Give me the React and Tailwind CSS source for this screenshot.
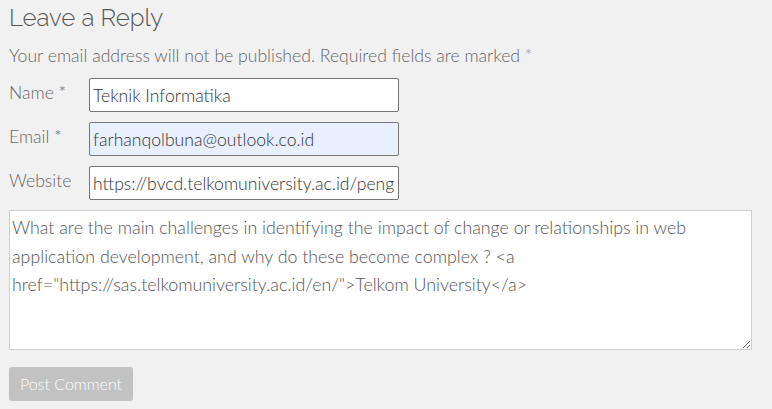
import React from 'react';

const comment =
  'What are the main challenges in identifying the impact of change or relationships in web\napplication development, and why do these become complex ? <a\nhref="https://sas.telkomuniversity.ac.id/en/">Telkom University</a>';

const Field = ({ label, value, autofill }) => (
  <div className="flex items-start">
    <label className="w-[80px] pt-[3px] text-[17.6px] leading-[24px] font-light text-[#666]">{label}</label>
    <input
      readOnly
      value={value}
      className={`w-[310px] h-[34px] px-[3px] border border-[#767676] rounded-[2px] text-[17.6px] font-light text-[#333] outline-none ${
        autofill ? 'bg-[#e8f0fe]' : 'bg-white'
      }`}
    />
  </div>
);

const App = () => {
  return (
    <div className="w-[772px] h-[409px] bg-[#f1f1f1] px-[9px] pt-[3px] font-['Lato','Open_Sans',sans-serif] overflow-hidden">
      <h3 className="text-[24px] font-light text-[#555] leading-[30px] font-['Raleway','Lato',sans-serif]">Leave a Reply</h3>
      <p className="mt-[11px] text-[17.6px] font-light text-[#666] leading-[24px]">
        Your email address will not be published. Required fields are marked <span className="text-[#999]">*</span>
      </p>
      <div className="mt-[10px] flex flex-col gap-[10px]">
        <Field label="Name *" value="Teknik Informatika" />
        <Field label="Email *" value="farhanqolbuna@outlook.co.id" autofill />
        <Field label="Website" value="https://bvcd.telkomuniversity.ac.id/pengumuman" />
      </div>
      <textarea
        readOnly
        value={comment}
        className="mt-[10px] block w-[743px] h-[140px] resize-y bg-white border border-[#cfcfcf] px-[2px] py-[2px] text-[17.8px] font-light leading-[28.5px] text-[#555] outline-none"
      />
      <button className="mt-[17px] h-[34px] w-[124px] bg-[#c2c2c2] rounded-[3px] text-white text-[16px] font-light">
        Post Comment
      </button>
    </div>
  );
};

export default App;
